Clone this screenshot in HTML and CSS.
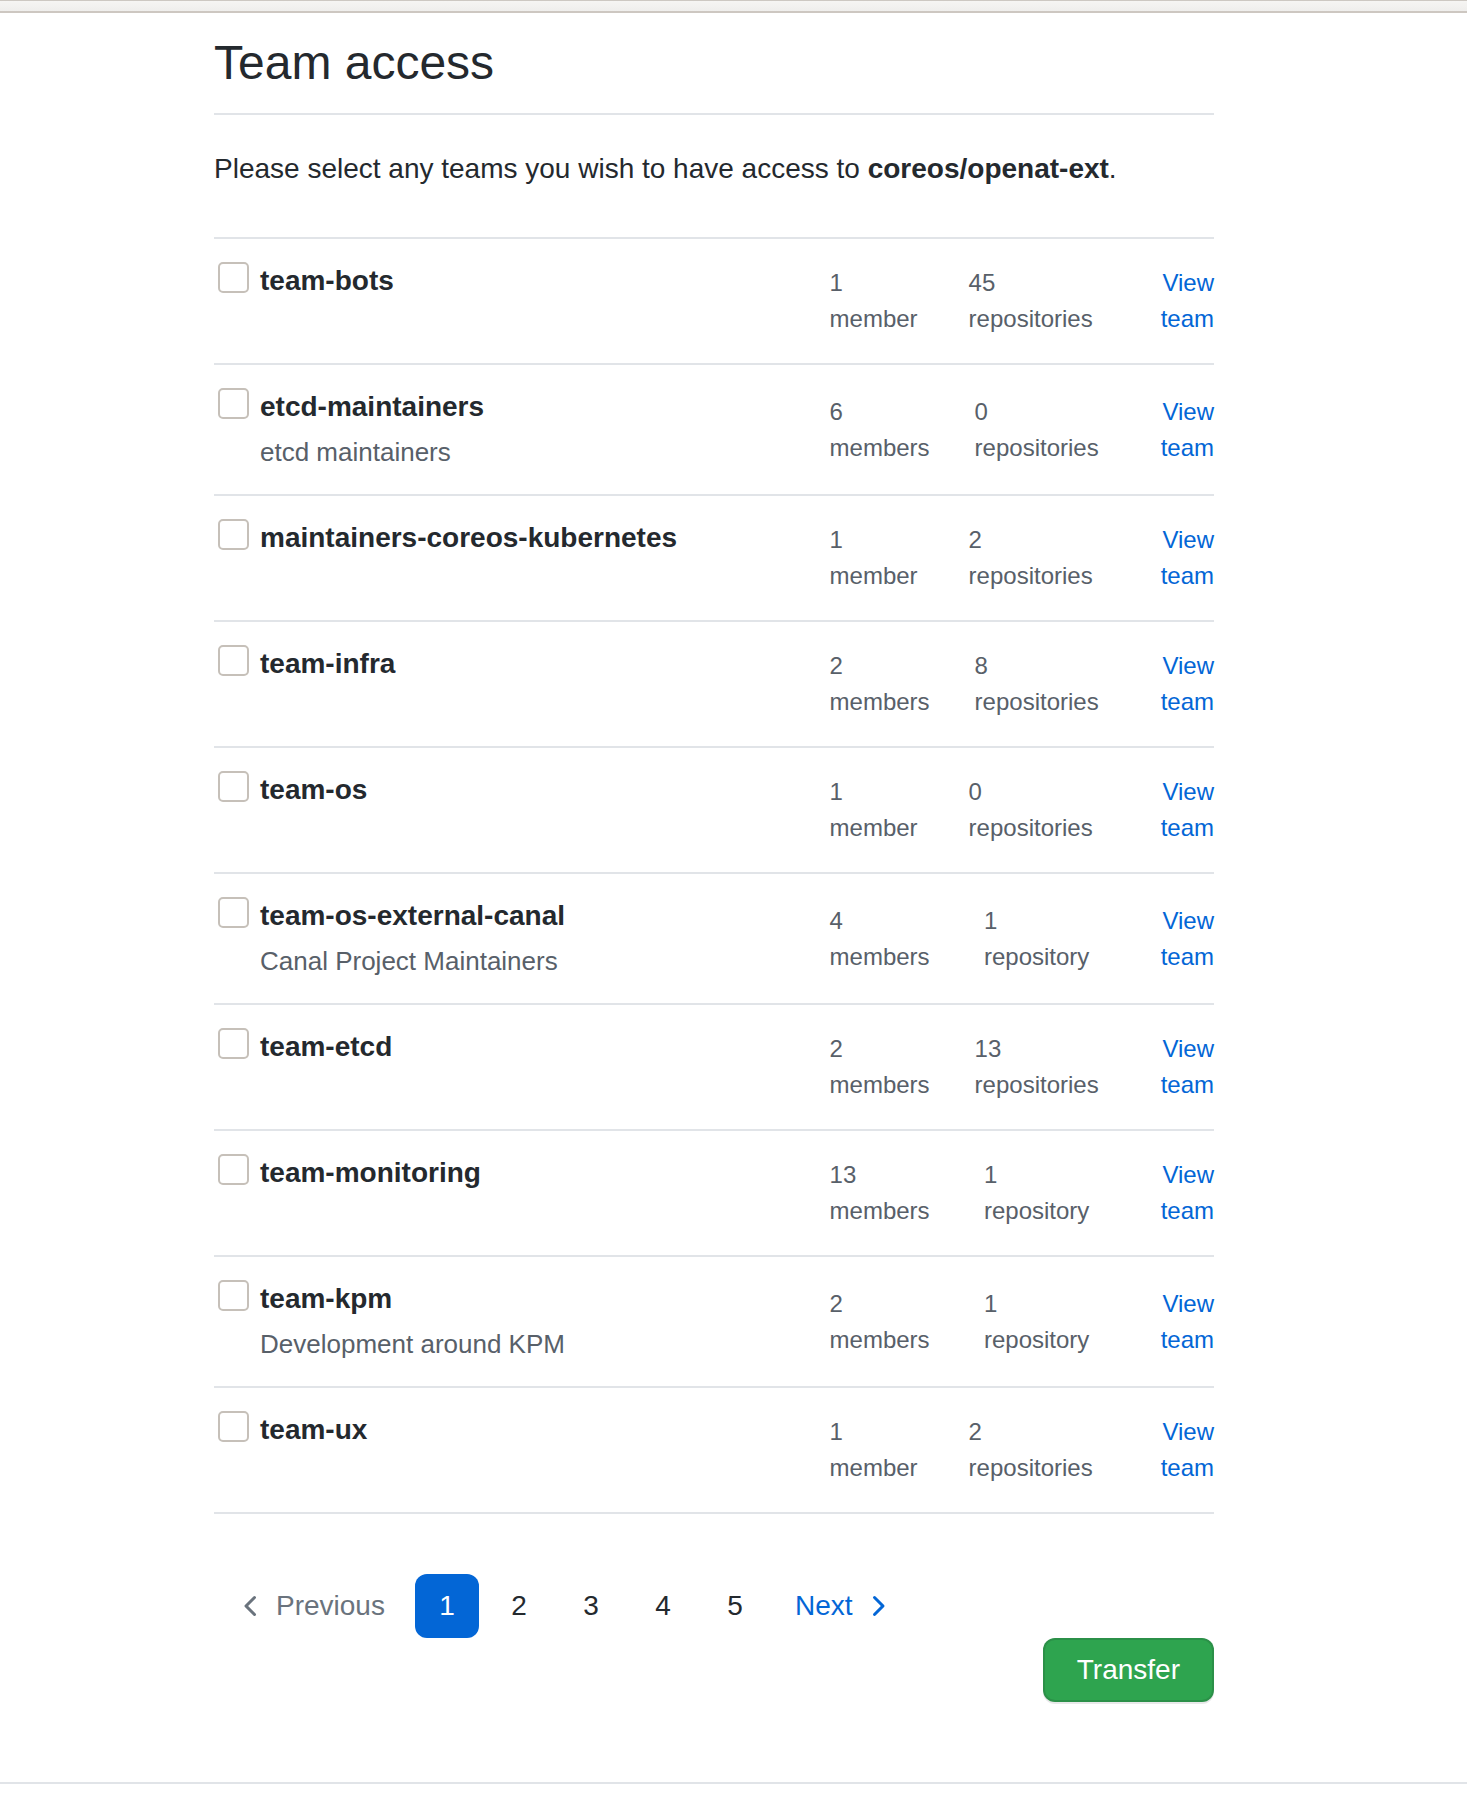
FILE: index.html
```html
<!DOCTYPE html>
<html lang="en">
<head>
<meta charset="utf-8">
<title>Team access</title>
<link rel="stylesheet" href="styles.css">
</head>
<body>
<div class="topbar"></div>
<main class="container">
  <div class="subhead">
    <h1 class="subhead-heading">Team access</h1>
  </div>
  <p class="intro">Please select any teams you wish to have access to <strong>coreos/openat-ext</strong>.</p>

  <div class="team-list">
    <div class="team">
      <div class="team-main">
        <input type="checkbox" class="checkbox">
        <div class="team-info"><div class="team-name">team-bots</div></div>
      </div>
      <div class="team-stats">
        <div class="stat"><span>1</span><span>member</span></div>
        <div class="stat"><span>45</span><span>repositories</span></div>
        <div class="view"><a href="#"><span>View</span><span>team</span></a></div>
      </div>
    </div>

    <div class="team">
      <div class="team-main">
        <input type="checkbox" class="checkbox">
        <div class="team-info"><div class="team-name">etcd-maintainers</div><div class="team-desc">etcd maintainers</div></div>
      </div>
      <div class="team-stats">
        <div class="stat"><span>6</span><span>members</span></div>
        <div class="stat"><span>0</span><span>repositories</span></div>
        <div class="view"><a href="#"><span>View</span><span>team</span></a></div>
      </div>
    </div>

    <div class="team">
      <div class="team-main">
        <input type="checkbox" class="checkbox">
        <div class="team-info"><div class="team-name">maintainers-coreos-kubernetes</div></div>
      </div>
      <div class="team-stats">
        <div class="stat"><span>1</span><span>member</span></div>
        <div class="stat"><span>2</span><span>repositories</span></div>
        <div class="view"><a href="#"><span>View</span><span>team</span></a></div>
      </div>
    </div>

    <div class="team">
      <div class="team-main">
        <input type="checkbox" class="checkbox">
        <div class="team-info"><div class="team-name">team-infra</div></div>
      </div>
      <div class="team-stats">
        <div class="stat"><span>2</span><span>members</span></div>
        <div class="stat"><span>8</span><span>repositories</span></div>
        <div class="view"><a href="#"><span>View</span><span>team</span></a></div>
      </div>
    </div>

    <div class="team">
      <div class="team-main">
        <input type="checkbox" class="checkbox">
        <div class="team-info"><div class="team-name">team-os</div></div>
      </div>
      <div class="team-stats">
        <div class="stat"><span>1</span><span>member</span></div>
        <div class="stat"><span>0</span><span>repositories</span></div>
        <div class="view"><a href="#"><span>View</span><span>team</span></a></div>
      </div>
    </div>

    <div class="team">
      <div class="team-main">
        <input type="checkbox" class="checkbox">
        <div class="team-info"><div class="team-name">team-os-external-canal</div><div class="team-desc">Canal Project Maintainers</div></div>
      </div>
      <div class="team-stats">
        <div class="stat"><span>4</span><span>members</span></div>
        <div class="stat"><span>1</span><span>repository</span></div>
        <div class="view"><a href="#"><span>View</span><span>team</span></a></div>
      </div>
    </div>

    <div class="team">
      <div class="team-main">
        <input type="checkbox" class="checkbox">
        <div class="team-info"><div class="team-name">team-etcd</div></div>
      </div>
      <div class="team-stats">
        <div class="stat"><span>2</span><span>members</span></div>
        <div class="stat"><span>13</span><span>repositories</span></div>
        <div class="view"><a href="#"><span>View</span><span>team</span></a></div>
      </div>
    </div>

    <div class="team">
      <div class="team-main">
        <input type="checkbox" class="checkbox">
        <div class="team-info"><div class="team-name">team-monitoring</div></div>
      </div>
      <div class="team-stats">
        <div class="stat"><span>13</span><span>members</span></div>
        <div class="stat"><span>1</span><span>repository</span></div>
        <div class="view"><a href="#"><span>View</span><span>team</span></a></div>
      </div>
    </div>

    <div class="team">
      <div class="team-main">
        <input type="checkbox" class="checkbox">
        <div class="team-info"><div class="team-name">team-kpm</div><div class="team-desc">Development around KPM</div></div>
      </div>
      <div class="team-stats">
        <div class="stat"><span>2</span><span>members</span></div>
        <div class="stat"><span>1</span><span>repository</span></div>
        <div class="view"><a href="#"><span>View</span><span>team</span></a></div>
      </div>
    </div>

    <div class="team">
      <div class="team-main">
        <input type="checkbox" class="checkbox">
        <div class="team-info"><div class="team-name">team-ux</div></div>
      </div>
      <div class="team-stats">
        <div class="stat"><span>1</span><span>member</span></div>
        <div class="stat"><span>2</span><span>repositories</span></div>
        <div class="view"><a href="#"><span>View</span><span>team</span></a></div>
      </div>
    </div>
  </div>

  <nav class="pagination">
    <span class="page prev"><svg class="chev" viewBox="0 0 16 16" width="32" height="32"><path fill="currentColor" d="M9.78 12.78a.75.75 0 01-1.06 0L4.47 8.53a.75.75 0 010-1.06l4.25-4.25a.75.75 0 011.06 1.06L6.06 8l3.72 3.72a.75.75 0 010 1.06z"/></svg>Previous</span>
    <span class="page current">1</span>
    <a class="page" href="#">2</a>
    <a class="page" href="#">3</a>
    <a class="page" href="#">4</a>
    <a class="page" href="#">5</a>
    <a class="page next" href="#">Next<svg class="chev" viewBox="0 0 16 16" width="32" height="32"><path fill="currentColor" d="M6.22 3.22a.75.75 0 011.06 0l4.25 4.25a.75.75 0 010 1.06l-4.25 4.25a.75.75 0 01-1.06-1.06L9.94 8 6.22 4.28a.75.75 0 010-1.06z"/></svg></a>
  </nav>

  <div class="actions">
    <button class="btn-primary" type="button">Transfer</button>
  </div>
</main>
<footer class="footer"></footer>
</body>
</html>
```
FILE: styles.css
```css
* {
  box-sizing: border-box;
}

body {
  margin: 0;
  font-family: "Liberation Sans", Arial, sans-serif;
  color: #24292e;
  background: #fff;
}

.topbar {
  height: 13px;
  border-top: 1px solid #cdc8c2;
  border-bottom: 2px solid #cdc7c1;
  background: linear-gradient(#f6f5f3, #efeeec);
}

.container {
  width: 1000px;
  margin-left: 214px;
  padding-bottom: 80px;
}

.subhead {
  padding: 20px 0;
  border-bottom: 2px solid #e1e4e8;
}

.subhead-heading {
  margin: 0;
  font-size: 48px;
  font-weight: 400;
  line-height: 60px;
}

.intro {
  margin: 33px 0 47px;
  font-size: 28px;
  line-height: 42px;
}

.team {
  display: flex;
  align-items: center;
  border-top: 2px solid #e1e4e8;
  padding: 26px 0 26px;
}

.team:last-child {
  border-bottom: 2px solid #e1e4e8;
}

.team-main {
  flex: 0 0 615.6px;
  align-self: flex-start;
  display: flex;
  align-items: flex-start;
}

.checkbox {
  appearance: none;
  -webkit-appearance: none;
  flex: none;
  width: 31px;
  height: 31px;
  margin: -3px 11px 0 4px;
  border: 2px solid #c6c0b9;
  border-radius: 5px;
  background: #fff;
}

.team-name {
  font-size: 28px;
  font-weight: 700;
  line-height: 32px;
}

.team-desc {
  margin-top: 13px;
  font-size: 26px;
  line-height: 32px;
  color: #586069;
}

.team-stats {
  flex: 1;
  display: flex;
  align-items: flex-start;
}

.stat {
  flex: 1 1 auto;
  font-size: 24px;
  line-height: 36px;
  color: #586069;
}

.stat span,
.view span {
  display: block;
}

.view {
  flex: none;
  margin-left: 17px;
  text-align: right;
  font-size: 24px;
  line-height: 36px;
}

.view a {
  color: #0366d6;
  text-decoration: none;
}

.pagination {
  display: flex;
  align-items: center;
  gap: 8px;
  margin-top: 60px;
}

.page {
  display: flex;
  align-items: center;
  justify-content: center;
  min-width: 64px;
  height: 64px;
  padding: 10px 20px;
  border-radius: 12px;
  font-size: 28px;
  line-height: 44px;
  color: #24292e;
  text-decoration: none;
}

.page.current {
  background: #0366d6;
  color: #fff;
}

.page.prev {
  color: #6a737d;
  padding-left: 22px;
  padding-right: 22px;
}

.page.prev .chev {
  margin-right: 8px;
}

.page.next {
  color: #0366d6;
}

.page.next .chev {
  margin-left: 8px;
}

.chev {
  flex: none;
  display: block;
}

.actions {
  display: flex;
  justify-content: flex-end;
}

.btn-primary {
  font-family: inherit;
  font-size: 28px;
  line-height: 40px;
  padding: 10px 32px;
  border: 2px solid rgba(27, 31, 35, 0.15);
  border-radius: 12px;
  background: #2ea44f;
  color: #fff;
  box-shadow: 0 2px 0 rgba(27, 31, 35, 0.1);
}

.footer {
  border-top: 2px solid #e1e4e8;
  height: 12px;
}
```
